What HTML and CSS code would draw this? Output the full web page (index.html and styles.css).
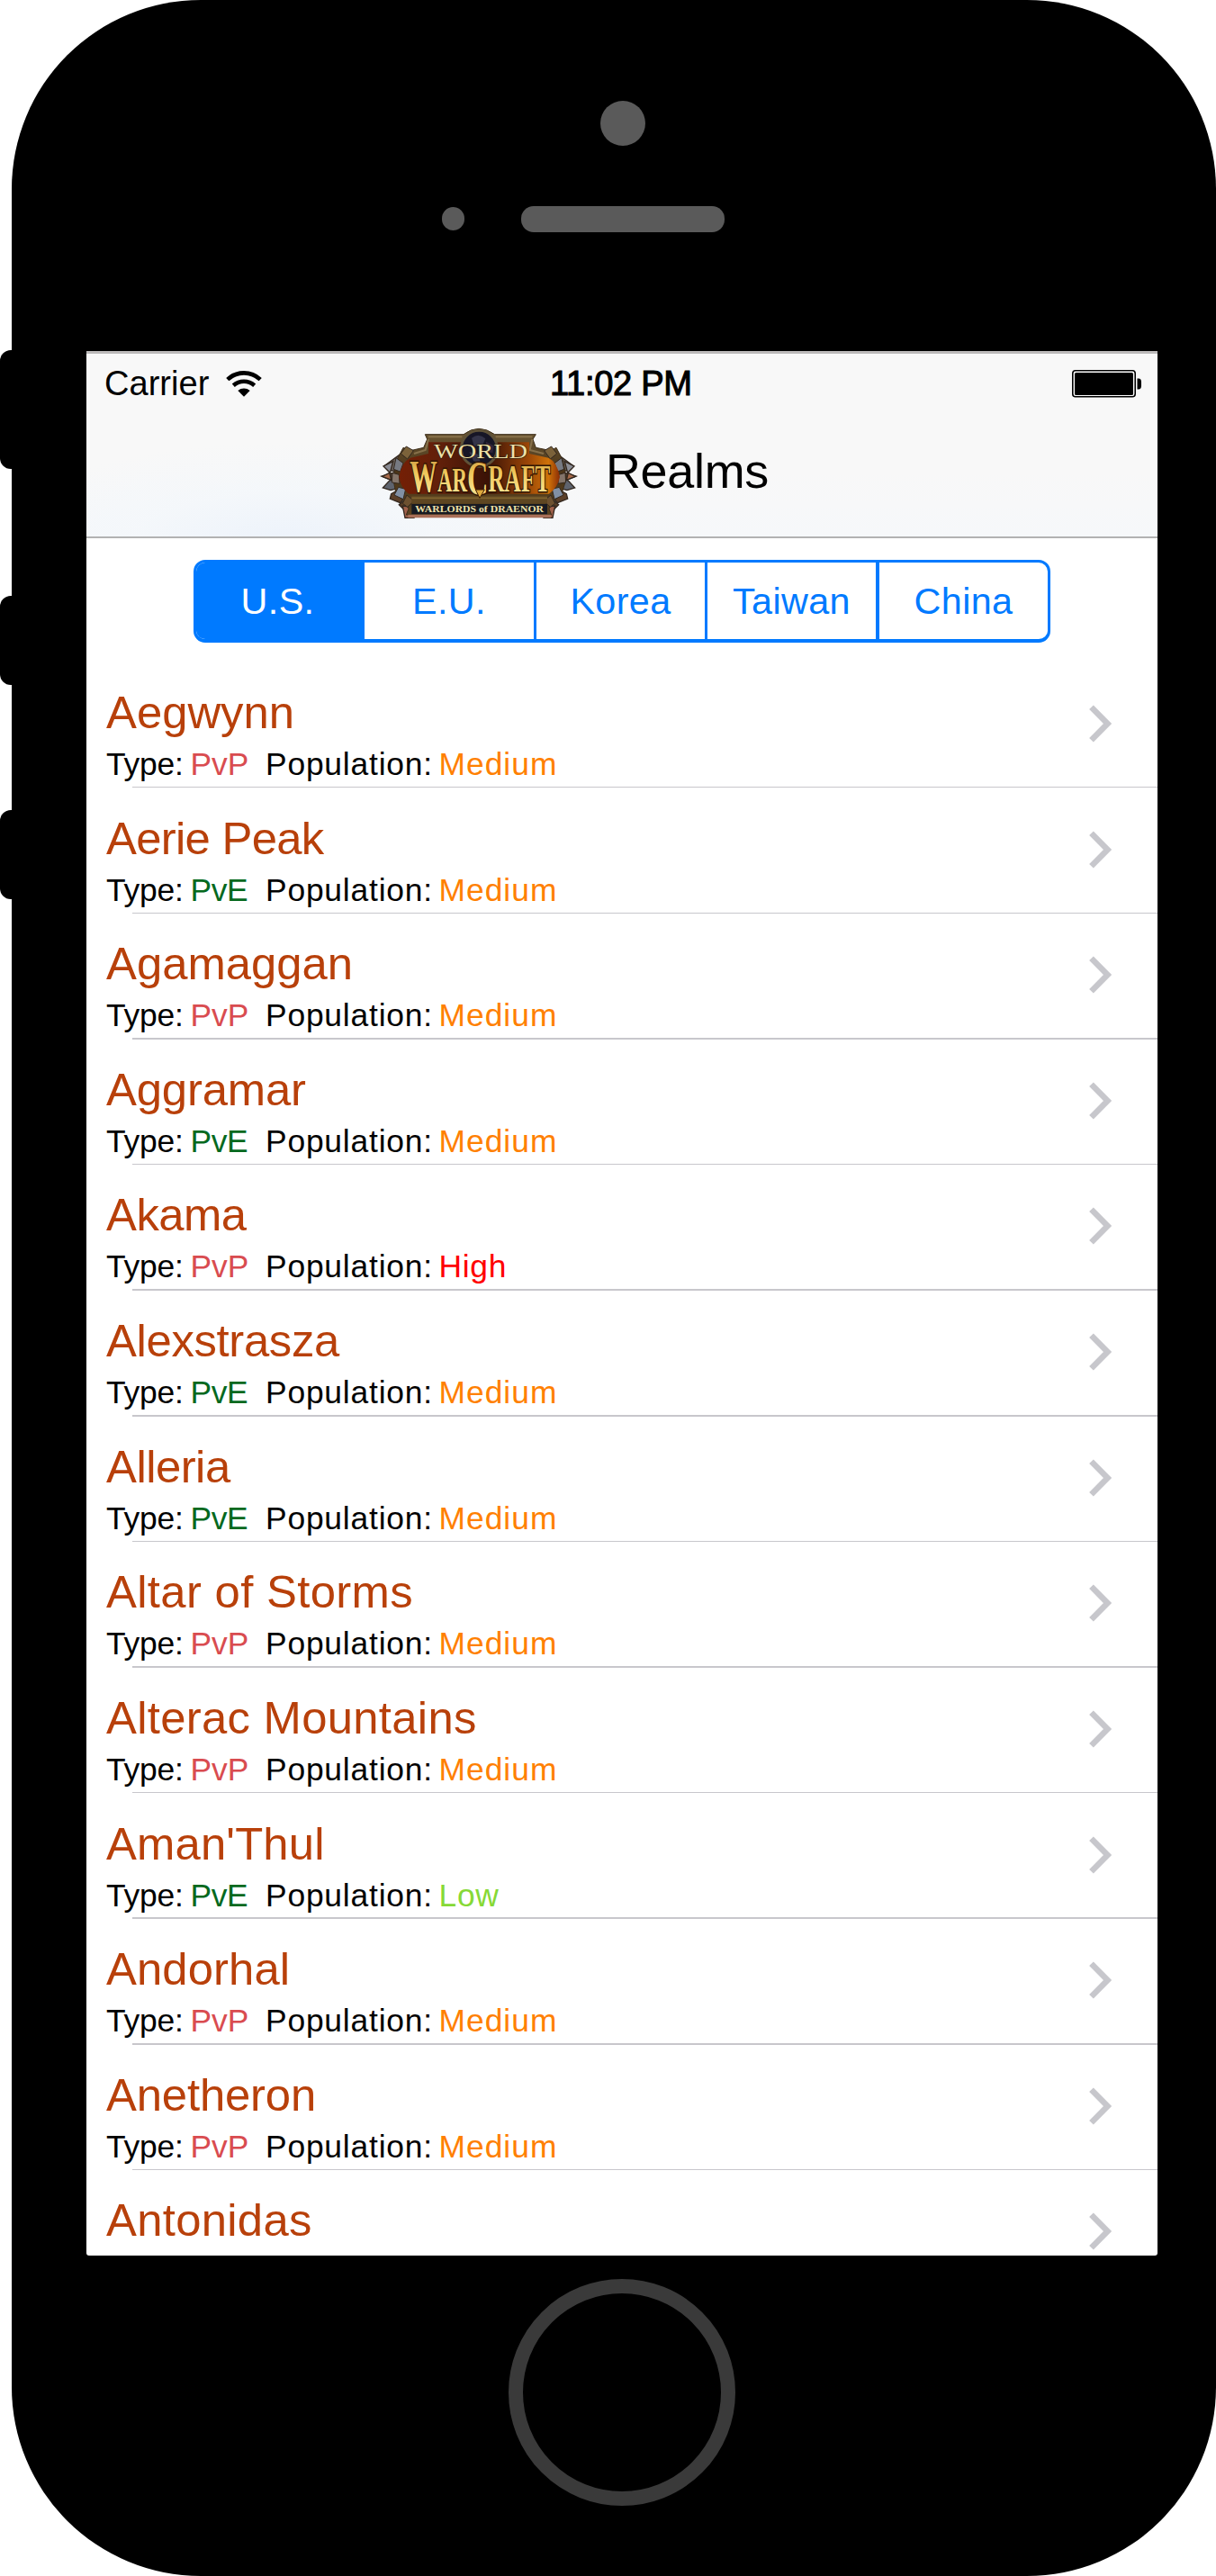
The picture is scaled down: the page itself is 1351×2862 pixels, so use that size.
FILE: index.html
```html
<!DOCTYPE html>
<html lang="en">
<head>
<meta charset="utf-8">
<title>Realms</title>
<link rel="stylesheet" href="styles.css">
</head>
<body>
<svg class="defs" width="0" height="0" aria-hidden="true">
  <symbol id="chevron" viewBox="0 0 28 44">
    <path d="M4.5 3.8 22.5 22 4.5 40.2" fill="none" stroke="#c7c7cc" stroke-width="6.6"/>
  </symbol>
</svg>
<div class="device">
  <span class="side-button mute"></span>
  <span class="side-button volume-up"></span>
  <span class="side-button volume-down"></span>

  <div class="bezel-top">
    <span class="camera"></span>
    <div class="speaker-row">
      <span class="sensor"></span>
      <span class="speaker"></span>
    </div>
  </div>

  <main class="screen">
    <header class="header">
      <div class="status-bar">
        <div class="carrier">
          <span>Carrier</span>
          <svg class="wifi" viewBox="0 0 40 29">
            <g fill="none" stroke="#000" stroke-width="4.6">
              <path d="M1.8 9.6C12 -.1 28 -.1 38.2 9.6"/>
              <path d="M8.3 16.3c6.8-6 16.6-6 23.4 0"/>
            </g>
            <path d="M13.3 22c4-3.300 9.400-3.300 13.400 0L20 28.800z"/>
          </svg>
        </div>
        <span class="clock">11:02 PM</span>
        <svg class="battery" viewBox="0 0 77 31">
          <rect x=".8" y=".8" width="69.4" height="29" rx="3" fill="#fff" stroke="#000" stroke-width="1.6"/>
          <rect x="3" y="3" width="65" height="25" rx="1.5"/>
          <path d="M72.5 9.5h1.5q3 0 3 4v4q0 4-3 4h-1.5z"/>
        </svg>
      </div>
      <div class="nav-bar">
        <svg class="logo" viewBox="72 48 648 300" role="img" aria-label="World of Warcraft: Warlords of Draenor">
          <defs>
            <linearGradient id="frame" x1="0" y1="0" x2="0" y2="1">
              <stop offset="0" stop-color="#6e5a36"/><stop offset=".5" stop-color="#4a3519"/><stop offset="1" stop-color="#5a4320"/>
            </linearGradient>
            <linearGradient id="plate">
              <stop offset="0" stop-color="#741f05"/><stop offset=".25" stop-color="#62200a"/><stop offset=".55" stop-color="#3b1206"/><stop offset=".8" stop-color="#9a4507"/><stop offset=".93" stop-color="#cf7309"/><stop offset="1" stop-color="#8a2c06"/>
            </linearGradient>
            <linearGradient id="gold" x1="0" y1="0" x2="0" y2="1">
              <stop offset="0" stop-color="#c08a38"/><stop offset=".4" stop-color="#efc65a"/><stop offset=".75" stop-color="#f8e08a"/><stop offset="1" stop-color="#d98f24"/>
            </linearGradient>
            <g id="blades" stroke="#33281f" stroke-width="4">
              <path d="M150 122 82 172l12 16 40 4z" fill="#6b625c"/>
              <path d="M110 158 78 174l22 22z" fill="#8b8d95"/>
              <path d="M128 190 72 207l30 12 28 2z" fill="#4c3c2e"/>
              <path d="M98 196 74 208l30 12z" fill="#a66a4a"/>
              <path d="M126 212l-28 10-22 24 26 8 30-8z" fill="#5f646e"/>
              <path d="M150 240l-46 26-4 16 34 14 26-30z" fill="#5c4029"/>
              <path d="M160 276l-30 26 16 16 30-8z" fill="#5a3f26"/>
              <path d="M142 306l8 40h30l-6-36z" fill="#a0604a"/>
            </g>
            <g id="straps" stroke="#33281f" stroke-width="3">
              <path d="M120 146l24 18-10 28-22-8z" fill="#777a82"/>
              <path d="M108 196l22 6 2 30-26-4z" fill="#84756a"/>
              <path d="M128 244l24 6-8 34-30-14z" fill="#8190a4"/>
              <path d="M156 270l24 20-22 20-16-12z" fill="#6d5130"/>
              <path d="M154 108l-18 24 22 18 20-28z" fill="#7b623a"/>
            </g>
          </defs>
          <use href="#blades"/>
          <use href="#blades" transform="matrix(-1 0 0 1 792 0)"/>
          <path d="M217 68h128q50-38 104 0h137l-10 16 10 28 50 10 18-10 22 42 12 60-16 52-32 30-10 20 8 20H154l8-20-10-20-32-30-10-52 12-60 22-42 24 10 44-10 12-28z" fill="url(#frame)" stroke="#3c2d19" stroke-width="3"/>
          <use href="#straps"/>
          <use href="#straps" transform="matrix(-1 0 0 1 792 0)"/>
          <path d="M228 76h112M452 76h122M228 84l-10 36-38 12M574 84l-8 36 46 12" fill="none" stroke="#87704a" stroke-width="6"/>
          <path d="M228 94h336v38l64 14q30 14 38 64-8 36-36 56H162q-26-20-32-56 8-50 38-64l60-14z" fill="url(#plate)"/>
          <path d="M172 272h452v26H172z" fill="#5e4622"/>
          <path d="M172 280h452" stroke="#80652f" stroke-width="5"/>
          <path d="M172 300h452v34H172z" fill="#171a22"/>
          <path d="M160 335h476v11H160z" fill="#a96f58"/>
          <circle cx="397" cy="115" r="60" fill="#171626" stroke="#5f5238" stroke-width="9"/>
          <path d="M372 80q24-18 46 2l-12 26-26-2zM364 126l30 8 8 30-24-8z" fill="#343449"/>
          <path d="M420 92l26 14-4 24-22-6z" fill="#30253a"/>
          <text class="logo-world" x="246" y="146" font-size="71" textLength="312" lengthAdjust="spacingAndGlyphs">WORLD</text>
          <text class="logo-warcraft" x="166" y="258" textLength="468" lengthAdjust="spacingAndGlyphs"><tspan font-size="152">W</tspan><tspan font-size="114">AR</tspan><tspan font-size="160" dy="8">C</tspan><tspan font-size="126" dy="-8">RAFT</tspan></text>
          <path d="M385 252l14 28 16-28z" fill="#dda93d" stroke="#3d1c05" stroke-width="3"/>
          <text class="logo-small" x="184" y="326" font-size="29" textLength="428" lengthAdjust="spacingAndGlyphs">WARLORDS of DRAENOR</text>
        </svg>
        <h1 class="title">Realms</h1>
      </div>
    </header>

    <nav class="regions">
      <span class="region region-active">U.S.</span>
      <span class="region">E.U.</span>
      <span class="region">Korea</span>
      <span class="region">Taiwan</span>
      <span class="region">China</span>
    </nav>

    <ul class="realms">
      <li class="realm"><div class="row"><div><h2 class="name">Aegwynn</h2><p class="meta"><span class="type">Type:</span><span class="pvp">PvP</span><span class="population">Population:</span><span class="medium">Medium</span></p></div><svg class="chevron"><use href="#chevron"/></svg></div></li>
      <li class="realm"><div class="row"><div><h2 class="name">Aerie Peak</h2><p class="meta"><span class="type">Type:</span><span class="pve">PvE</span><span class="population">Population:</span><span class="medium">Medium</span></p></div><svg class="chevron"><use href="#chevron"/></svg></div></li>
      <li class="realm"><div class="row"><div><h2 class="name">Agamaggan</h2><p class="meta"><span class="type">Type:</span><span class="pvp">PvP</span><span class="population">Population:</span><span class="medium">Medium</span></p></div><svg class="chevron"><use href="#chevron"/></svg></div></li>
      <li class="realm"><div class="row"><div><h2 class="name">Aggramar</h2><p class="meta"><span class="type">Type:</span><span class="pve">PvE</span><span class="population">Population:</span><span class="medium">Medium</span></p></div><svg class="chevron"><use href="#chevron"/></svg></div></li>
      <li class="realm"><div class="row"><div><h2 class="name">Akama</h2><p class="meta"><span class="type">Type:</span><span class="pvp">PvP</span><span class="population">Population:</span><span class="high">High</span></p></div><svg class="chevron"><use href="#chevron"/></svg></div></li>
      <li class="realm"><div class="row"><div><h2 class="name">Alexstrasza</h2><p class="meta"><span class="type">Type:</span><span class="pve">PvE</span><span class="population">Population:</span><span class="medium">Medium</span></p></div><svg class="chevron"><use href="#chevron"/></svg></div></li>
      <li class="realm"><div class="row"><div><h2 class="name">Alleria</h2><p class="meta"><span class="type">Type:</span><span class="pve">PvE</span><span class="population">Population:</span><span class="medium">Medium</span></p></div><svg class="chevron"><use href="#chevron"/></svg></div></li>
      <li class="realm"><div class="row"><div><h2 class="name">Altar of Storms</h2><p class="meta"><span class="type">Type:</span><span class="pvp">PvP</span><span class="population">Population:</span><span class="medium">Medium</span></p></div><svg class="chevron"><use href="#chevron"/></svg></div></li>
      <li class="realm"><div class="row"><div><h2 class="name">Alterac Mountains</h2><p class="meta"><span class="type">Type:</span><span class="pvp">PvP</span><span class="population">Population:</span><span class="medium">Medium</span></p></div><svg class="chevron"><use href="#chevron"/></svg></div></li>
      <li class="realm"><div class="row"><div><h2 class="name">Aman'Thul</h2><p class="meta"><span class="type">Type:</span><span class="pve">PvE</span><span class="population">Population:</span><span class="low">Low</span></p></div><svg class="chevron"><use href="#chevron"/></svg></div></li>
      <li class="realm"><div class="row"><div><h2 class="name">Andorhal</h2><p class="meta"><span class="type">Type:</span><span class="pvp">PvP</span><span class="population">Population:</span><span class="medium">Medium</span></p></div><svg class="chevron"><use href="#chevron"/></svg></div></li>
      <li class="realm"><div class="row"><div><h2 class="name">Anetheron</h2><p class="meta"><span class="type">Type:</span><span class="pvp">PvP</span><span class="population">Population:</span><span class="medium">Medium</span></p></div><svg class="chevron"><use href="#chevron"/></svg></div></li>
      <li class="realm"><div class="row"><div><h2 class="name">Antonidas</h2></div><svg class="chevron"><use href="#chevron"/></svg></div></li>
    </ul>
  </main>

  <span class="home-button"></span>
</div>
</body>
</html>
```
FILE: styles.css
```css
* {
  box-sizing: border-box;
  margin: 0;
  padding: 0;
}

body {
  width: 1351px;
  height: 2862px;
  overflow: hidden;
  background: #fff;
  color: #000;
  font-family: "Liberation Sans", Arial, sans-serif;
}

.defs {
  display: block;
}

/* Phone body */
.device {
  position: relative;
  display: flex;
  flex-direction: column;
  height: 2862px;
  margin-left: 13px;
  padding: 0 65px 0 83px;
  background: #000;
  border-radius: 210px;
}

.side-button {
  position: absolute;
  left: -13px;
  width: 26px;
  background: #000;
  border-radius: 12px;
}

.mute {
  top: 389px;
  height: 132px;
}

.volume-up {
  top: 662px;
  height: 99px;
}

.volume-down {
  top: 900px;
  height: 99px;
}

.bezel-top {
  display: flex;
  flex: none;
  flex-direction: column;
  height: 390px;
  padding-top: 111.5px;
}

.camera {
  width: 50px;
  height: 50px;
  margin-left: 570.5px;
  background: #5a5a5a;
  border-radius: 50%;
}

.speaker-row {
  display: flex;
  align-items: center;
  gap: 63px;
  margin: 67px 0 0 394.5px;
}

.sensor {
  width: 25.5px;
  height: 25.5px;
  background: #5a5a5a;
  border-radius: 50%;
}

.speaker {
  width: 226px;
  height: 29px;
  background: #5a5a5a;
  border-radius: 14px;
}

.screen {
  display: flex;
  flex: none;
  flex-direction: column;
  width: 1190px;
  height: 2116px;
  overflow: hidden;
  background: #fff;
  border-radius: 0 0 3px 3px;
}

/* Status and navigation bars */
.header {
  flex: none;
  height: 208px;
  background: radial-gradient(ellipse 330px 110px at 220px 208px, #edf3fb, rgba(243, 247, 251, .7) 50%, rgba(248, 248, 248, 0)), linear-gradient(#f8f8f8 65%, #f6f8fa);
  border-top: 3px solid #bcbaba;
  border-bottom: 2px solid #b2b2b2;
}

.status-bar {
  display: grid;
  grid-template-columns: 495px 1fr auto;
  align-items: center;
  height: 66px;
  padding: 0 18px 0 20px;
  font-size: 38.1px;
}

.carrier {
  display: flex;
  align-items: center;
  gap: 19px;
}

.wifi {
  width: 40px;
  height: 29px;
}

.clock {
  letter-spacing: -.3px;
  -webkit-text-stroke: 1.1px #000;
}

.battery {
  width: 77px;
  height: 31px;
}

.nav-bar {
  display: flex;
  align-items: center;
  height: 137px;
  padding: 0 0 3px 328px;
}

.logo {
  width: 216px;
  height: 100px;
  overflow: visible;
}

.logo-world,
.logo-small {
  fill: #eee1a8;
  font-family: "Liberation Serif", serif;
  font-weight: 700;
}

.logo-world {
  stroke: #2a1c10;
  stroke-width: 3px;
  paint-order: stroke;
  font-weight: 400;
}

.logo-warcraft {
  fill: url(#gold);
  stroke: #301604;
  stroke-width: 9px;
  paint-order: stroke;
  font-family: "Liberation Serif", serif;
  font-weight: 700;
}

.title {
  margin: 0 0 6px 33px;
  font-size: 53.9px;
  font-weight: 400;
  letter-spacing: -.3px;
  line-height: 60px;
}

/* Region switch */
.regions {
  display: grid;
  flex: none;
  grid-template-columns: 187px 191px 190px 191px 187px;
  width: 952px;
  height: 92px;
  margin: 24px 0 21.8px 119px;
  overflow: hidden;
  border: 3px solid #007aff;
  border-bottom-width: 4px;
  border-radius: 13px;
}

.region {
  display: flex;
  align-items: center;
  justify-content: center;
  padding-top: 1px;
  border-right: 3px solid #007aff;
  color: #007aff;
  font-size: 41.3px;
  letter-spacing: .4px;
}

.region:nth-child(4) {
  border-right-width: 4px;
}

.region:last-child {
  border-right: 0;
}

.region.region-active {
  padding-right: 3px;
  background: #007aff;
  color: #fff;
}

/* Realm list */
.realms {
  flex: none;
  list-style: none;
}

.realm {
  display: flex;
  flex-direction: column;
  height: 139.63px;
}

.realm::after {
  content: "";
  height: 1px;
  margin: auto 0 0 51px;
  background: #c8c7cc;
}

.realm:nth-child(3)::after,
.realm:nth-child(5)::after,
.realm:nth-child(6)::after,
.realm:nth-child(8)::after,
.realm:nth-child(10)::after,
.realm:nth-child(11)::after {
  height: 2px;
}

.row {
  display: flex;
  justify-content: space-between;
  padding: 26.1px 50px 0 22px;
}

.name {
  color: #b8400a;
  font-size: 50.8px;
  font-weight: 400;
  line-height: 60px;
  white-space: nowrap;
}

.realm:nth-child(1) .name { letter-spacing: 0; }
.realm:nth-child(2) .name { letter-spacing: -.7px; }
.realm:nth-child(3) .name { letter-spacing: 0; }
.realm:nth-child(4) .name { letter-spacing: -.16px; }
.realm:nth-child(5) .name { letter-spacing: -.5px; }
.realm:nth-child(6) .name { letter-spacing: -.33px; }
.realm:nth-child(7) .name { letter-spacing: -.5px; }
.realm:nth-child(8) .name { letter-spacing: .34px; }
.realm:nth-child(9) .name { letter-spacing: .3px; }
.realm:nth-child(10) .name { letter-spacing: .15px; }
.realm:nth-child(11) .name { letter-spacing: .1px; }
.realm:nth-child(12) .name { letter-spacing: -.15px; }
.realm:nth-child(13) .name { letter-spacing: .3px; }

.meta {
  display: grid;
  grid-template-columns: 93.5px 83.5px 192.5px auto;
  margin-top: 7px;
  font-size: 35.4px;
  line-height: 40px;
}

.type {
  letter-spacing: -.2px;
}

.population {
  letter-spacing: .8px;
}

.pvp {
  color: #d94c50;
}

.pve {
  color: #05691e;
  letter-spacing: -.4px;
}

.medium {
  color: #ff8000;
  letter-spacing: 1px;
}

.high {
  color: #f00;
  letter-spacing: .7px;
}

.low {
  color: #86d936;
  letter-spacing: .7px;
}

.chevron {
  flex: none;
  width: 28px;
  height: 44px;
  margin-top: 20px;
}

/* Home button */
.home-button {
  flex: none;
  width: 252px;
  height: 252px;
  margin: 26px 0 0 468.5px;
  border: 16.5px solid #3a3a3a;
  border-radius: 50%;
}
```
